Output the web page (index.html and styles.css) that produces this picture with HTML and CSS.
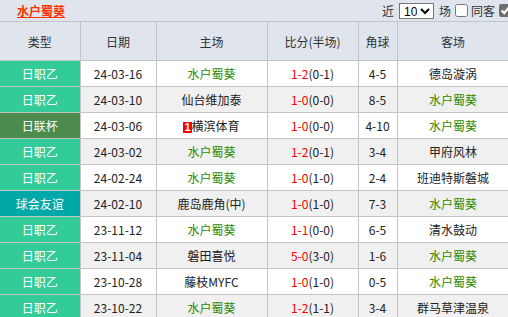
FILE: index.html
```html
<!DOCTYPE html>
<html lang="zh">
<head>
<meta charset="utf-8">
<link rel="stylesheet" href="styles.css">
</head>
<body>
<div class="page">
  <div class="bar">
    <a class="team-title" href="#">水户蜀葵</a>
    <div class="controls">
      <span>近</span>
      <select class="sel"><option>10</option></select>
      <span>场</span>
      <input type="checkbox" class="chk">
      <span>同客</span>
      <input type="checkbox" class="chk chk-on" checked>
    </div>
  </div>
  <table class="tbl">
    <colgroup>
      <col class="c1"><col class="c2"><col class="c3"><col class="c4"><col class="c5"><col class="c6">
    </colgroup>
    <thead>
      <tr><th>类型</th><th>日期</th><th>主场</th><th>比分(半场)</th><th>角球</th><th>客场</th></tr>
    </thead>
    <tbody>
      <tr><td class="lg jl">日职乙</td><td>24-03-16</td><td class="me">水户蜀葵</td><td><span class="sc">1-2</span>(0-1)</td><td>4-5</td><td>德岛漩涡</td></tr>
      <tr class="alt"><td class="lg jl">日职乙</td><td>24-03-10</td><td>仙台维加泰</td><td><span class="sc">1-0</span>(0-0)</td><td>8-5</td><td class="me">水户蜀葵</td></tr>
      <tr><td class="lg cup">日联杯</td><td>24-03-06</td><td><span class="badge">1</span>横滨体育</td><td><span class="sc">1-0</span>(0-0)</td><td>4-10</td><td class="me">水户蜀葵</td></tr>
      <tr class="alt"><td class="lg jl">日职乙</td><td>24-03-02</td><td class="me">水户蜀葵</td><td><span class="sc">1-2</span>(0-1)</td><td>3-4</td><td>甲府风林</td></tr>
      <tr><td class="lg jl">日职乙</td><td>24-02-24</td><td class="me">水户蜀葵</td><td><span class="sc">1-0</span>(1-0)</td><td>2-4</td><td>班迪特斯磐城</td></tr>
      <tr class="alt"><td class="lg fr">球会友谊</td><td>24-02-10</td><td>鹿岛鹿角(中)</td><td><span class="sc">1-0</span>(1-0)</td><td>7-3</td><td class="me">水户蜀葵</td></tr>
      <tr><td class="lg jl">日职乙</td><td>23-11-12</td><td class="me">水户蜀葵</td><td><span class="sc">1-1</span>(0-0)</td><td>6-5</td><td>清水鼓动</td></tr>
      <tr class="alt"><td class="lg jl">日职乙</td><td>23-11-04</td><td>磐田喜悦</td><td><span class="sc">5-0</span>(3-0)</td><td>1-6</td><td class="me">水户蜀葵</td></tr>
      <tr><td class="lg jl">日职乙</td><td>23-10-28</td><td>藤枝MYFC</td><td><span class="sc">1-0</span>(1-0)</td><td>0-5</td><td class="me">水户蜀葵</td></tr>
      <tr class="alt"><td class="lg jl">日职乙</td><td>23-10-22</td><td class="me">水户蜀葵</td><td><span class="sc">1-2</span>(1-1)</td><td>3-4</td><td>群马草津温泉</td></tr>
    </tbody>
  </table>
</div>
</body>
</html>
```
FILE: styles.css
```css
html, body {
  margin: 0;
  padding: 0;
  overflow: hidden;
  background: #ffffff;
}
.page {
  width: 508px;
  font-family: "Noto Sans CJK SC", "Liberation Sans", sans-serif;
  font-size: 12px;
  color: #333;
}
.bar {
  height: 21px;
  background: #dfe4ed;
  display: flex;
  align-items: center;
  justify-content: space-between;
  padding-left: 17px;
  box-sizing: border-box;
}
.team-title {
  color: #ff3300;
  font-weight: bold;
  text-decoration: underline;
  font-size: 12px;
  line-height: 16px;
}
.controls {
  display: flex;
  align-items: center;
  gap: 0;
  margin-right: -7px;
  color: #333;
  font-size: 12px;
}
.sel {
  width: 35px;
  height: 16px;
  margin: 0 5px 0 5px;
  font-size: 12px;
  font-family: "Liberation Sans", sans-serif;
  padding: 0;
  border: 1px solid #767676;
  background: #fff;
  color: #000;
}
.chk {
  width: 13px;
  height: 13px;
  margin: 0 3px 0 4px;
  flex: none;
}
.chk-on {
  accent-color: #6f6f6f;
}
.tbl {
  width: 509px;
  border-collapse: collapse;
  table-layout: fixed;
  border-top: 1px solid #c4c4c4;
}
.c1 { width: 80px; }
.c2 { width: 76px; }
.c3 { width: 111px; }
.c4 { width: 91px; }
.c5 { width: 39px; }
.c6 { width: 112px; }
.tbl th {
  height: 38px;
  padding: 0;
  background: #dfe4ed;
  font-weight: normal;
  color: #333;
  border-right: 1px solid #c4c4c4;
  border-bottom: 1px solid #c4c4c4;
  text-align: center;
}
.tbl td {
  height: 25px;
  padding: 0;
  text-align: center;
  color: #222;
  border-right: 1px solid #c4c4c4;
  border-bottom: 1px solid #c4c4c4;
  white-space: nowrap;
}
.tbl td:first-child, .tbl th:first-child {
  border-left: none;
}
.tbl tr.alt td { background: #f0f0f0; }
.tbl td.lg { color: #fff; }
.tbl tr td.jl { background: #33cc99; }
.tbl tr td.cup { background: #4c8b4c; }
.tbl tr td.fr { background: #00a8a8; }
.tbl td.me { color: #2a8a00; }
.sc { color: #ff0000; }
.badge {
  display: inline-block;
  background: #ff0000;
  color: #fff;
  font-weight: bold;
  font-family: "Liberation Sans", sans-serif;
  font-size: 11px;
  line-height: 11px;
  padding: 0 1px;
  margin-right: 0;
  vertical-align: 0;
}
```
